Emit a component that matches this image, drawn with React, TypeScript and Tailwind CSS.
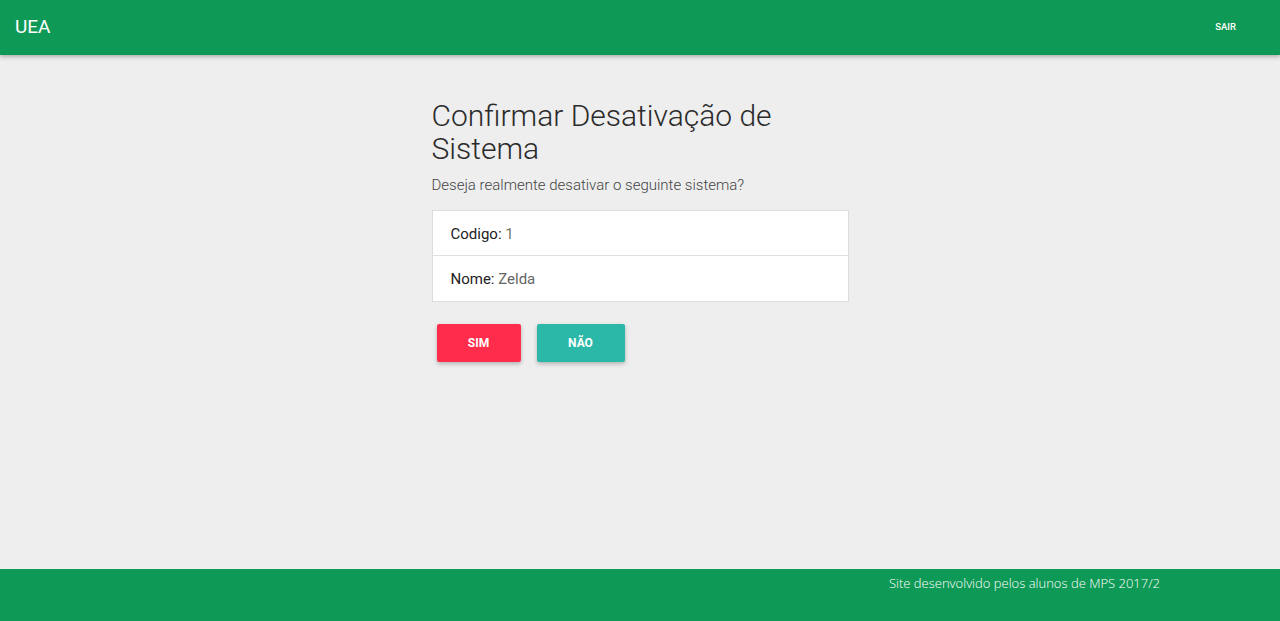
import React from "react";

export default function App() {
  return (
    <div className="flex h-[621px] w-[1280px] flex-col bg-[#eeeeee]" style={{ fontFamily: "Roboto, 'Noto Sans', sans-serif" }}>
      <header className="relative z-10 flex h-[55px] shrink-0 items-center justify-between bg-[#0f9956] pl-[15px] pr-[44px] shadow-[0_2px_4px_rgba(0,0,0,0.25)]">
        <span className="text-[19px] text-white">UEA</span>
        <span className="text-[9.5px] font-medium text-white">SAIR</span>
      </header>
      <main className="flex flex-1 justify-center">
        <div className="w-[417px] pt-[44px]">
          <h1 className="text-[30px] font-light leading-[33px] text-[#2b2b2b]">Confirmar Desativação de Sistema</h1>
          <p className="mt-[9px] text-[15px] font-light text-[#444]">Deseja realmente desativar o seguinte sistema?</p>
          <div className="mt-[13px] border border-[#dddddd] bg-white">
            <div className="flex h-[45px] items-center border-b border-[#e0e0e0] pl-[18px] pt-[3px] text-[15px] text-[#222]">
              Codigo:&nbsp;<span className="text-[#777766]">1</span>
            </div>
            <div className="flex h-[45px] items-center pl-[18px] pt-[3px] text-[15px] text-[#222]">
              Nome:&nbsp;<span className="text-[#666]">Zelda</span>
            </div>
          </div>
          <div className="mt-[22px] flex gap-[16px] pl-[5px]">
            <button className="h-[38px] w-[84px] rounded-[2px] bg-[#ff2d4b] text-[12px] font-bold text-white shadow-[0_2px_4px_rgba(0,0,0,0.25)]">SIM</button>
            <button className="h-[38px] w-[88px] rounded-[2px] bg-[#2bb8a8] text-[12px] font-bold text-white shadow-[0_2px_4px_rgba(0,0,0,0.25)]">NÃO</button>
          </div>
        </div>
      </main>
      <footer className="flex h-[52px] shrink-0 justify-end bg-[#0f9956] pr-[120px] pt-[5px]">
        <span className="text-[13px] font-light text-white" style={{ fontFamily: "'Open Sans', sans-serif" }}>Site desenvolvido pelos alunos de MPS 2017/2</span>
      </footer>
    </div>
  );
}
